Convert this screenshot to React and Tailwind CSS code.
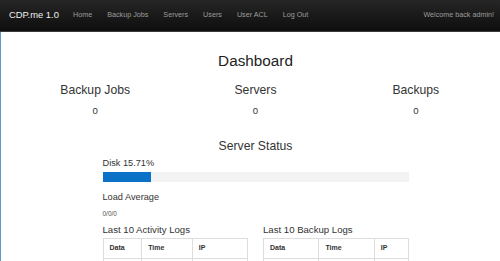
const navLinks = ['Home', 'Backup Jobs', 'Servers', 'Users', 'User ACL', 'Log Out'];

const stats = [
  { label: 'Backup Jobs', value: 0 },
  { label: 'Servers', value: 0 },
  { label: 'Backups', value: 0 },
];

const disk = 15.71;

function LogTable({ title, widths }) {
  return (
    <div className="flex-1">
      <h4 className="mt-[6px] text-[9.6px] leading-[12px] text-[#333]">{title}</h4>
      <table className="mt-[2px] w-full border-collapse border border-[#ddd] text-[7px] text-[#333]">
        <thead>
          <tr className="h-[20px]">
            {['Data', 'Time', 'IP'].map((h, i) => (
              <th
                key={h}
                style={{ width: widths[i] }}
                className="border border-[#ddd] pl-[6px] text-left font-bold"
              >
                {h}
              </th>
            ))}
          </tr>
        </thead>
        <tbody>
          <tr className="h-[20px]">
            <td className="border border-[#ddd]"></td>
            <td className="border border-[#ddd]"></td>
            <td className="border border-[#ddd]"></td>
          </tr>
        </tbody>
      </table>
    </div>
  );
}

export default function App() {
  return (
    <div className="flex h-[261px] w-[500px] flex-col overflow-hidden bg-white font-['Liberation_Sans',Arial,sans-serif]">
      {/* Navbar */}
      <nav className="flex h-[32px] shrink-0 items-center border-b border-[#3a3a3a] bg-gradient-to-b from-[#262626] to-[#0e0e0e]">
        <a className="w-[73px] pl-[9px] text-[9.4px] text-[#eee]">CDP.me 1.0</a>
        <ul className="flex gap-[15px] text-[7.2px] text-[#9d9d9d]">
          {navLinks.map((l) => (
            <li key={l}>{l}</li>
          ))}
        </ul>
        <span className="ml-auto pr-[6px] text-[7.2px] text-[#9d9d9d]">Welcome back admin!</span>
      </nav>

      {/* Main */}
      <main className="flex-1 border-l border-[#6495c9] pl-[14px] pr-[4px]">
        <h1 className="mt-[20px] text-center text-[15.3px] leading-[18px] text-[#222]">Dashboard</h1>

        <div className="mt-[13px] grid grid-cols-3 text-center text-[#333]">
          {stats.map((s) => (
            <div key={s.label}>
              <h3 className="text-[12.2px] leading-[14px]">{s.label}</h3>
              <p className="mt-[8px] text-[9.6px] leading-[12px]">{s.value}</p>
            </div>
          ))}
        </div>

        <div className="mx-auto w-[306px] text-[#333]">
          <h2 className="mt-[22px] text-center text-[12.2px] leading-[14px]">Server Status</h2>
          <p className="mt-[5px] text-[9.2px] leading-[11px]">Disk {disk}%</p>
          <div className="mt-[3px] h-[10px] bg-[#f3f3f3]">
            <div className="h-full bg-[#0b72c7]" style={{ width: `${disk}%` }}></div>
          </div>
          <p className="mt-[10px] text-[9.2px] leading-[11px]">Load Average</p>
          <p className="mt-[7px] text-[6.5px] leading-[8px] text-[#555]">0/0/0</p>

          <div className="flex gap-[15px]">
            <LogTable title="Last 10 Activity Logs" widths={[39, 51, 56]} />
            <LogTable title="Last 10 Backup Logs" widths={[56, 56, 34]} />
          </div>
        </div>
      </main>
    </div>
  );
}
